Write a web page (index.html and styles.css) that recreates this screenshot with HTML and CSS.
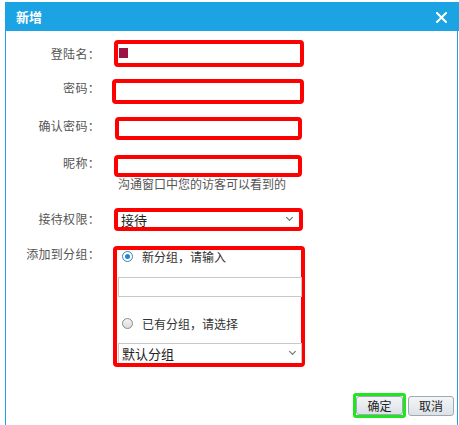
FILE: index.html
```html
<!DOCTYPE html>
<html lang="zh">
<head>
<meta charset="utf-8">
<link rel="stylesheet" href="styles.css">
</head>
<body>
<div class="dialog">
  <div class="dialog-head">
    <span class="dialog-title">新增</span>
    <svg class="close" width="11" height="11" viewBox="0 0 11 11"><path d="M1 1L10 10M10 1L1 10" stroke="#fff" stroke-width="2" stroke-linecap="square"/></svg>
  </div>
  <div class="dialog-body">
    <div class="row row-1">
      <label class="lbl">登陆名：</label>
      <div class="box box-1"><span class="caret"></span></div>
    </div>
    <div class="row row-2">
      <label class="lbl">密码：</label>
      <div class="box box-2"></div>
    </div>
    <div class="row row-3">
      <label class="lbl">确认密码：</label>
      <div class="box box-3"></div>
    </div>
    <div class="row row-4">
      <label class="lbl">昵称：</label>
      <div class="ctl">
        <div class="box box-4"></div>
        <div class="hint">沟通窗口中您的访客可以看到的</div>
      </div>
    </div>
    <div class="row row-5">
      <label class="lbl">接待权限：</label>
      <div class="box box-5 select"><span>接待</span><span class="chev"></span></div>
    </div>
    <div class="row row-6">
      <label class="lbl">添加到分组：</label>
      <div class="box box-6">
        <div class="radio-row"><span class="radio on"></span><span>新分组，请输入</span></div>
        <div class="plain-input"></div>
        <div class="radio-row radio-row-2"><span class="radio"></span><span>已有分组，请选择</span></div>
        <div class="plain-select"><span>默认分组</span><span class="chev"></span></div>
      </div>
    </div>
    <div class="actions">
      <div class="ok-wrap"><button class="btn">确定</button></div>
      <button class="btn btn-cancel">取消</button>
    </div>
  </div>
</div>
</body>
</html>
```
FILE: styles.css
```css
* { box-sizing: border-box; }
html, body { margin: 0; padding: 0; background: #fff; }
body {
  font-family: "Noto Sans CJK SC", "Noto Sans", sans-serif;
  font-size: 12px;
  color: #555;
}
.dialog {
  margin: 2px 0 0 5px;
  width: 454px;
  height: 423px;
  display: flex;
  flex-direction: column;
}
.dialog-head {
  height: 29px;
  background: #1ca3e4;
  display: flex;
  align-items: center;
  justify-content: space-between;
  padding: 0 12px 0 11px;
}
.dialog-title {
  color: #fff;
  font-weight: bold;
  font-size: 13px;
}
.close { display: block; margin-top: 1px; }
.dialog-body {
  flex: 1;
  border-left: 1px solid #1ca3e4;
  border-right: 1px solid #1ca3e4;
  width: 453px;
  padding-top: 9px;
  display: flex;
  flex-direction: column;
}
.row {
  display: grid;
  grid-template-columns: 94px 1fr;
  column-gap: 13px;
  align-items: start;
}
.lbl {
  text-align: right;
  line-height: 16px;
  white-space: nowrap;
  letter-spacing: 0.3px;
}
.box {
  border: 4px solid #ff0000;
  border-radius: 4px;
  background: #fff;
}
.row-1 .lbl { margin-top: 6px; }
.box-1 { height: 27px; width: 190px; margin-left: 1px; padding: 4px 0 0 1px; }
.caret { display: block; width: 9px; height: 10px; background: #9b1446; }
.row-2 { margin-top: 12px; }
.row-2 .lbl { margin-top: 1px; }
.box-2 { height: 25px; width: 192px; margin-left: -1px; }
.row-3 { margin-top: 13px; }
.row-3 .lbl { margin-top: 1px; }
.box-3 { height: 23px; width: 187px; margin-left: 2px; }
.row-4 { margin-top: 15px; }
.row-4 .lbl { margin-top: 0px; }
.ctl { display: flex; flex-direction: column; }
.box-4 { height: 22px; width: 188px; margin-left: 1px; }
.hint { margin: 0 0 0 5px; line-height: 13px; height: 14px; font-size: 12px; color: #555; }
.row-5 { margin-top: 17px; }
.row-5 .lbl { margin-top: 3px; }
.select {
  display: flex;
  align-items: center;
  justify-content: space-between;
  font-size: 13px;
  color: #222;
}
.box-5 { height: 23px; width: 189px; margin-left: 1px; padding: 0 7px 0 3px; }
.chev {
  width: 5px; height: 5px;
  border-right: 1px solid #666;
  border-bottom: 1px solid #666;
  transform: rotate(45deg);
  margin-top: -4px;
}
.row-6 { margin-top: 15px; }
.row-6 .lbl { margin-top: 0px; }
.box-6 {
  width: 192px;
  height: 121px;
  padding: 0 0 0 1px;
  display: flex;
  flex-direction: column;
}
.radio-row {
  display: flex;
  align-items: center;
  gap: 9px;
  font-size: 12px;
  color: #333;
  height: 12px;
  padding-left: 4px;
}
.radio {
  width: 11px; height: 11px;
  border-radius: 50%;
  border: 1px solid #8a8a8a;
  background: linear-gradient(#f2f2f2, #dcdcdc);
  position: relative;
}
.radio.on { border-color: #3c7fb1; background: #fff; }
.radio.on::after {
  content: "";
  position: absolute;
  left: 2px; top: 2px;
  width: 5px; height: 5px;
  border-radius: 50%;
  background: #1a8ad6;
}
.plain-input {
  margin-top: 15px;
  width: 184px;
  height: 20px;
  border: 1px solid #c8c8c8;
  background: #fff;
}
.radio-row-2 { margin-top: 20px; }
.plain-select {
  margin-top: 14px;
  width: 184px;
  height: 20px;
  border: 1px solid #c8c8c8;
  border-bottom: none;
  display: flex;
  align-items: center;
  justify-content: space-between;
  padding: 0 6px 0 3px;
  font-size: 13px;
  color: #222;
}
.actions {
  margin-top: 26px;
  display: flex;
  justify-content: flex-end;
  align-items: center;
  gap: 2px;
  padding-right: 3px;
}
.ok-wrap {
  border: 3px solid #22e522;
  border-radius: 3px;
  padding: 0;
}
.btn {
  font-family: "Noto Sans CJK SC", sans-serif;
  font-size: 12px;
  color: #222;
  height: 19px;
  padding: 0;
  border: 1px solid #9fa9b3;
  border-radius: 3px;
  background: linear-gradient(#f3f5f7, #dde2e7);
  line-height: 16px;
  display: block;
}
.ok-wrap .btn { width: 47px; }
.btn-cancel { width: 46px; height: 20px; }
```
